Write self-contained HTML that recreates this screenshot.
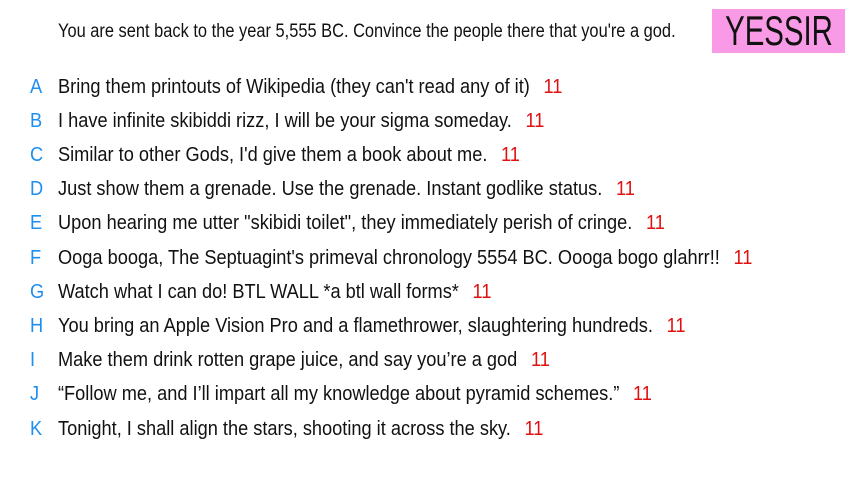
<!DOCTYPE html>
<html><head><meta charset="utf-8"><style>
html,body{margin:0;padding:0;background:#fff;width:853px;height:480px;overflow:hidden;position:relative;font-family:"Liberation Sans",sans-serif;color:#111;}
.h{position:absolute;left:58px;top:21px;font-size:19px;white-space:nowrap;transform:scaleX(0.864);transform-origin:0 0;}
.box{position:absolute;left:712px;top:9px;width:133px;height:44px;background:#f99ae6;overflow:hidden;}
.box span{position:absolute;left:50%;top:0;font-size:42px;line-height:44px;color:#111;white-space:nowrap;transform:translateX(-50%) scaleX(0.7);}
.row{position:absolute;left:0;height:30px;font-size:20px;line-height:30px;white-space:nowrap;}
.l{position:absolute;left:30px;color:#1e8ef0;transform:scaleX(0.91);transform-origin:0 0;}
.t{position:absolute;left:58px;transform:scaleX(0.91);transform-origin:0 0;}
.n{color:#e01010;margin-left:15px;}
</style></head><body>
<div class="h">You are sent back to the year 5,555 BC. Convince the people there that you're a god.</div>
<div class="box"><span>YESSIR</span></div>
<div class="row" style="top:72px"><span class="l">A</span><span class="t">Bring them printouts of Wikipedia (they can't read any of it)<span class="n">11</span></span></div>
<div class="row" style="top:106px"><span class="l">B</span><span class="t">I have infinite skibiddi rizz, I will be your sigma someday.<span class="n">11</span></span></div>
<div class="row" style="top:140px"><span class="l">C</span><span class="t">Similar to other Gods, I'd give them a book about me.<span class="n">11</span></span></div>
<div class="row" style="top:174px"><span class="l">D</span><span class="t">Just show them a grenade. Use the grenade. Instant godlike status.<span class="n">11</span></span></div>
<div class="row" style="top:208px"><span class="l">E</span><span class="t">Upon hearing me utter "skibidi toilet", they immediately perish of cringe.<span class="n">11</span></span></div>
<div class="row" style="top:243px"><span class="l">F</span><span class="t">Ooga booga, The Septuagint's primeval chronology 5554 BC. Oooga bogo glahrr!!<span class="n">11</span></span></div>
<div class="row" style="top:277px"><span class="l">G</span><span class="t">Watch what I can do! BTL WALL *a btl wall forms*<span class="n">11</span></span></div>
<div class="row" style="top:311px"><span class="l">H</span><span class="t">You bring an Apple Vision Pro and a flamethrower, slaughtering hundreds.<span class="n">11</span></span></div>
<div class="row" style="top:345px"><span class="l">I</span><span class="t">Make them drink rotten grape juice, and say you’re a god<span class="n">11</span></span></div>
<div class="row" style="top:379px"><span class="l">J</span><span class="t">“Follow me, and I’ll impart all my knowledge about pyramid schemes.”<span class="n">11</span></span></div>
<div class="row" style="top:414px"><span class="l">K</span><span class="t">Tonight, I shall align the stars, shooting it across the sky.<span class="n">11</span></span></div>
</body></html>
